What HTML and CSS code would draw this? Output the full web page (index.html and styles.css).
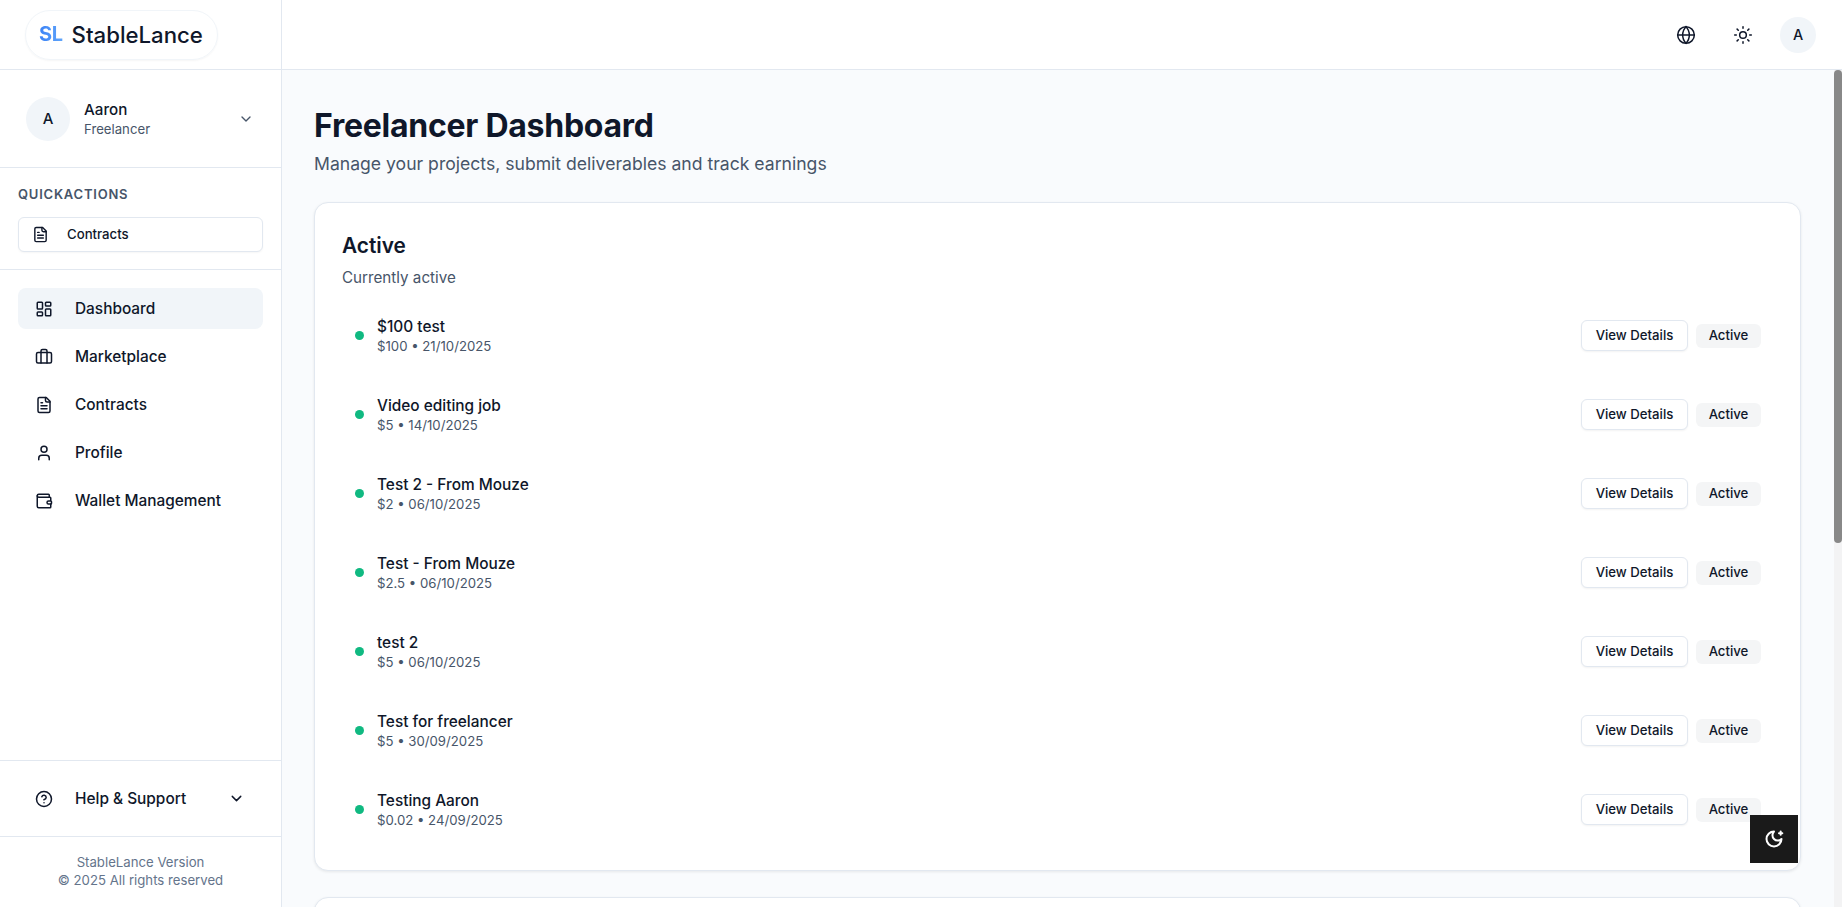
FILE: index.html
```html
<!DOCTYPE html>
<html lang="en">
<head>
<meta charset="utf-8">
<title>Freelancer Dashboard</title>
<link rel="stylesheet" href="styles.css">
</head>
<body>
<div class="app">
  <aside class="sidebar">
    <div class="brand-bar">
      <div class="brand"><span class="brand-mark">SL</span><span class="brand-name">StableLance</span></div>
    </div>
    <div class="user">
      <div class="avatar avatar-lg">A</div>
      <div class="user-text"><div class="user-name">Aaron</div><div class="user-role">Freelancer</div></div>
      <svg class="ico chev-muted" viewBox="0 0 24 24"><path d="m6 9 6 6 6-6"/></svg>
    </div>
    <div class="quick">
      <div class="quick-title">QUICKACTIONS</div>
      <button class="quick-btn">
        <svg class="ico" viewBox="0 0 24 24"><path d="M15 2H6a2 2 0 0 0-2 2v16a2 2 0 0 0 2 2h12a2 2 0 0 0 2-2V7Z"/><path d="M14 2v4a2 2 0 0 0 2 2h4"/><path d="M10 9H8"/><path d="M16 13H8"/><path d="M16 17H8"/></svg>
        <span class="btn-label">Contracts</span>
      </button>
    </div>
    <nav class="nav">
      <a class="nav-item is-current"><svg class="ico" viewBox="0 0 24 24"><rect x="3" y="3" width="7" height="9" rx="1"/><rect x="14" y="3" width="7" height="5" rx="1"/><rect x="14" y="12" width="7" height="9" rx="1"/><rect x="3" y="16" width="7" height="5" rx="1"/></svg><span>Dashboard</span></a>
      <a class="nav-item"><svg class="ico" viewBox="0 0 24 24"><path d="M16 20V4a2 2 0 0 0-2-2h-4a2 2 0 0 0-2 2v16"/><rect x="2" y="6" width="20" height="14" rx="2"/></svg><span>Marketplace</span></a>
      <a class="nav-item"><svg class="ico" viewBox="0 0 24 24"><path d="M15 2H6a2 2 0 0 0-2 2v16a2 2 0 0 0 2 2h12a2 2 0 0 0 2-2V7Z"/><path d="M14 2v4a2 2 0 0 0 2 2h4"/><path d="M10 9H8"/><path d="M16 13H8"/><path d="M16 17H8"/></svg><span>Contracts</span></a>
      <a class="nav-item"><svg class="ico" viewBox="0 0 24 24"><path d="M19 21v-2a4 4 0 0 0-4-4H9a4 4 0 0 0-4 4v2"/><circle cx="12" cy="7" r="4"/></svg><span>Profile</span></a>
      <a class="nav-item"><svg class="ico" viewBox="0 0 24 24"><path d="M19 7V4a1 1 0 0 0-1-1H5a2 2 0 0 0 0 4h15a1 1 0 0 1 1 1v4h-3a2 2 0 0 0 0 4h3a1 1 0 0 0 1-1v-2a1 1 0 0 0-1-1"/><path d="M3 5v14a2 2 0 0 0 2 2h15a1 1 0 0 0 1-1v-4"/></svg><span>Wallet Management</span></a>
    </nav>
    <div class="help">
      <svg class="ico" viewBox="0 0 24 24"><circle cx="12" cy="12" r="10"/><path d="M9.09 9a3 3 0 0 1 5.83 1c0 2-3 3-3 3"/><path d="M12 17h.01"/></svg>
      <span class="help-label">Help &amp; Support</span>
      <svg class="ico help-chev" viewBox="0 0 24 24"><path d="m6 9 6 6 6-6"/></svg>
    </div>
    <footer class="side-foot"><div>StableLance Version</div><div>© 2025 All rights reserved</div></footer>
  </aside>
  <div class="main">
    <header class="topbar">
      <svg class="ico top-ico" viewBox="0 0 24 24"><circle cx="12" cy="12" r="10"/><path d="M12 2a14.5 14.5 0 0 0 0 20 14.5 14.5 0 0 0 0-20"/><path d="M2 12h20"/></svg>
      <svg class="ico top-ico" viewBox="0 0 24 24"><circle cx="12" cy="12" r="4"/><path d="M12 2v2"/><path d="M12 20v2"/><path d="m4.93 4.93 1.41 1.41"/><path d="m17.66 17.66 1.41 1.41"/><path d="M2 12h2"/><path d="M20 12h2"/><path d="m6.34 17.66-1.41 1.41"/><path d="m19.07 4.93-1.41 1.41"/></svg>
      <div class="avatar avatar-sm">A</div>
    </header>
    <div class="body">
      <main class="content">
        <h1 class="page-title">Freelancer Dashboard</h1>
        <p class="page-sub">Manage your projects, submit deliverables and track earnings</p>
        <section class="card">
          <h2 class="card-title">Active</h2>
          <p class="card-sub">Currently active</p>
          <ul class="rows">
            <li class="row"><span class="dot"></span><div class="row-text"><div class="row-title">$100 test</div><div class="row-meta">$100 • 21/10/2025</div></div><button class="btn">View Details</button><span class="tag">Active</span></li>
            <li class="row"><span class="dot"></span><div class="row-text"><div class="row-title">Video editing job</div><div class="row-meta">$5 • 14/10/2025</div></div><button class="btn">View Details</button><span class="tag">Active</span></li>
            <li class="row"><span class="dot"></span><div class="row-text"><div class="row-title">Test 2 - From Mouze</div><div class="row-meta">$2 • 06/10/2025</div></div><button class="btn">View Details</button><span class="tag">Active</span></li>
            <li class="row"><span class="dot"></span><div class="row-text"><div class="row-title">Test - From Mouze</div><div class="row-meta">$2.5 • 06/10/2025</div></div><button class="btn">View Details</button><span class="tag">Active</span></li>
            <li class="row"><span class="dot"></span><div class="row-text"><div class="row-title">test 2</div><div class="row-meta">$5 • 06/10/2025</div></div><button class="btn">View Details</button><span class="tag">Active</span></li>
            <li class="row"><span class="dot"></span><div class="row-text"><div class="row-title">Test for freelancer</div><div class="row-meta">$5 • 30/09/2025</div></div><button class="btn">View Details</button><span class="tag">Active</span></li>
            <li class="row"><span class="dot"></span><div class="row-text"><div class="row-title">Testing Aaron</div><div class="row-meta">$0.02 • 24/09/2025</div></div><button class="btn">View Details</button><span class="tag">Active</span></li>
          </ul>
        </section>
        <section class="card card-next"></section>
      </main>
      <div class="rail"><div class="rail-thumb"></div></div>
    </div>
  </div>
</div>
<button class="theme-fab" aria-label="Toggle theme">
  <svg class="ico" viewBox="0 0 24 24"><path d="M12 3a6 6 0 0 0 9 9 9 9 0 1 1-9-9Z"/><path d="M20 3v4"/><path d="M22 5h-4"/></svg>
</button>
</body>
</html>
```
FILE: styles.css
```css
* { box-sizing: border-box; }
html, body { margin: 0; height: 100%; overflow: hidden; }
body { font-family: Inter, "Noto Sans", sans-serif; color: #0f172a; background: #fff; }
button { font-family: inherit; color: inherit; cursor: pointer; }
.ico { width: 18px; height: 18px; flex: none; fill: none; stroke: currentColor; stroke-width: 2; stroke-linecap: round; stroke-linejoin: round; }

.app { display: flex; height: 100vh; }

.sidebar { width: 282px; flex: none; display: flex; flex-direction: column; border-right: 1px solid #e2e8f0; background: #fff; }
.brand-bar { height: 70px; flex: none; padding: 10px 25px; border-bottom: 1px solid #e2e8f0; }
.brand { display: inline-flex; align-items: center; gap: 9px; height: 50px; padding: 0 14px 2px 13px; border: 1px solid #f1f5f9; border-radius: 25px; box-shadow: 0 1px 2px rgba(0,0,0,.04); }
.brand-mark { font-size: 20px; font-weight: 700; letter-spacing: -.02em; background: linear-gradient(90deg, #3b82f6, #60a5fa); -webkit-background-clip: text; background-clip: text; color: transparent; }
.brand-name { font-size: 22.2px; font-weight: 500; }

.user { display: flex; align-items: center; gap: 14px; height: 98px; flex: none; padding: 0 26px; border-bottom: 1px solid #e2e8f0; }
.avatar { display: flex; align-items: center; justify-content: center; border-radius: 50%; background: #f1f5f9; font-weight: 500; flex: none; }
.avatar-lg { width: 44px; height: 44px; font-size: 15px; }
.avatar-sm { width: 36px; height: 36px; font-size: 14.4px; margin-left: -10px; }
.user-text { flex: 1; min-width: 0; }
.user-name { font-size: 15.2px; line-height: 20px; font-weight: 500; }
.user-role { font-size: 13.2px; line-height: 18px; color: #475569; }
.chev-muted { color: #475569; width: 16px; height: 16px; margin-right: 1px; }

.quick { flex: none; height: 102px; padding: 17px 18px 0; border-bottom: 1px solid #e2e8f0; }
.quick-title { font-size: 13px; line-height: 18px; font-weight: 600; letter-spacing: .06em; color: #475569; }
.quick-btn { display: flex; align-items: center; gap: 18px; width: 245px; height: 35px; margin-top: 14px; padding: 0 13px; border: 1px solid #e2e8f0; border-radius: 6px; background: #fff; font-size: 13.2px; font-weight: 500; box-shadow: 0 1px 2px rgba(0,0,0,.04); }
.quick-btn .ico { width: 17px; height: 17px; }
.btn-label { padding-bottom: 2px; }

.nav { flex: 1; display: flex; flex-direction: column; gap: 7px; padding: 18px 18px 0; }
.nav-item { display: flex; align-items: center; gap: 22px; height: 41.2px; padding: 0 17px; border-radius: 8px; font-size: 15.4px; line-height: 20px; font-weight: 500; }
.nav-item .ico { width: 18px; height: 18px; }
.nav-item.is-current { background: #f1f5f9; }

.help { display: flex; align-items: center; gap: 22px; flex: none; height: 77px; padding: 0 27px 0 35px; border-top: 1px solid #e2e8f0; border-bottom: 1px solid #e2e8f0; font-size: 15.4px; font-weight: 500; margin-top: -1px; }
.help-label { flex: 1; }
.help-chev { width: 17px; height: 17px; margin-right: 9px; }
.side-foot { flex: none; height: 70px; padding-top: 16px; text-align: center; font-size: 13.2px; line-height: 18px; color: #64748b; }

.main { flex: 1; min-width: 0; display: flex; flex-direction: column; }
.topbar { flex: none; height: 70px; display: flex; align-items: center; justify-content: flex-end; gap: 37px; padding: 0 26px 0 0; background: #fff; border-bottom: 1px solid #e2e8f0; }
.top-ico { width: 20px; height: 20px; stroke-width: 1.8; }

.body { flex: 1; min-height: 0; display: flex; }
.content { flex: 1; min-width: 0; overflow: hidden; background: #f9fbfd; padding: 36px 33px 24px 32px; }
.rail { width: 8px; flex: none; background: #f3f3f4; }
.rail-thumb { height: 473px; background: #888; border-radius: 4px; }

.page-title { margin: 0; font-size: 32px; line-height: 40px; font-weight: 700; letter-spacing: -.008em; }
.page-sub { margin: 5px 0 0; font-size: 17.6px; line-height: 25px; color: #475569; }

.card { margin-top: 26px; padding: 29px 27px 21px; background: #fff; border: 1px solid #e2e8f0; border-radius: 14px; box-shadow: 0 1px 3px rgba(0,0,0,.08); }
.card-title { margin: 0; font-size: 20.8px; line-height: 28px; font-weight: 600; }
.card-sub { margin: 8px 0 0; font-size: 15.2px; line-height: 20px; color: #475569; }
.card-next { min-height: 560px; margin-top: 26px; }

.rows { list-style: none; margin: 8px 0 0; padding: 0 12px 0 0; }
.row { display: flex; align-items: center; height: 79px; padding-left: 13px; }
.dot { width: 9px; height: 9px; flex: none; margin-right: 13px; border-radius: 50%; background: #10b981; }
.row-text { flex: 1; min-width: 0; }
.row-title { margin-top: 1px; font-size: 15.4px; line-height: 20px; font-weight: 500; }
.row-meta { font-size: 13.2px; line-height: 19px; color: #475569; }
.btn { width: 107px; height: 31px; padding: 0 0 2px; border: 1px solid #e2e8f0; border-radius: 6px; background: #fff; font-size: 13.2px; font-weight: 500; box-shadow: 0 1px 2px rgba(0,0,0,.05); }
.tag { display: flex; align-items: center; justify-content: center; width: 65px; height: 24px; margin-left: 8px; padding-bottom: 2px; border-radius: 6px; background: #f4f5f6; font-size: 13.2px; font-weight: 500; }

.theme-fab { position: fixed; right: 44px; bottom: 44px; width: 48px; height: 48px; display: flex; align-items: center; justify-content: center; padding: 0; border: 0; background: #1a1a1a; color: #fff; }
.theme-fab .ico { width: 20px; height: 20px; stroke-width: 2.4; }
```
